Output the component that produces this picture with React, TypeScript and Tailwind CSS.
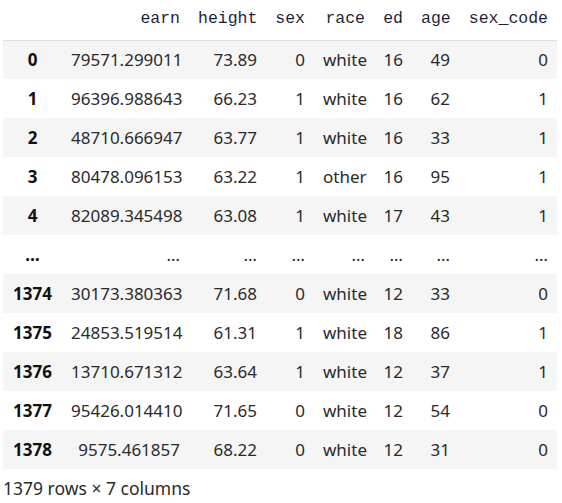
import React from "react";

const columns = ["earn", "height", "sex", "race", "ed", "age", "sex_code"];

// 열 너비는 스크린샷의 오른쪽 끝 위치에서 계산
const widths = [
  "w-[59px]",
  "w-[127px]",
  "w-[77px]",
  "w-[48px]",
  "w-[60px]",
  "w-[38px]",
  "w-[47px]",
  "w-[98px]",
];

const rows: string[][] = [
  ["0", "79571.299011", "73.89", "0", "white", "16", "49", "0"],
  ["1", "96396.988643", "66.23", "1", "white", "16", "62", "1"],
  ["2", "48710.666947", "63.77", "1", "white", "16", "33", "1"],
  ["3", "80478.096153", "63.22", "1", "other", "16", "95", "1"],
  ["4", "82089.345498", "63.08", "1", "white", "17", "43", "1"],
  ["...", "...", "...", "...", "...", "...", "...", "..."],
  ["1374", "30173.380363", "71.68", "0", "white", "12", "33", "0"],
  ["1375", "24853.519514", "61.31", "1", "white", "18", "86", "1"],
  ["1376", "13710.671312", "63.64", "1", "white", "12", "37", "1"],
  ["1377", "95426.014410", "71.65", "0", "white", "12", "54", "0"],
  ["1378", "9575.461857", "68.22", "0", "white", "12", "31", "0"],
];

const App: React.FC = () => {
  return (
    <div className="bg-white w-[562px] h-[503px] pl-[3px] text-[#2a2a2a] font-['Noto_Sans','Noto_Sans_CJK_KR',sans-serif]">
      <table className="table-fixed border-collapse w-[554px] text-[17px]">
        <colgroup>
          {widths.map((w, i) => (
            <col key={i} className={w} />
          ))}
        </colgroup>
        <thead>
          <tr className="h-[40px] border-b border-[#e0e0e0]">
            <th />
            {columns.map((c) => (
              <th
                key={c}
                className="text-right px-[9px] font-normal font-['Liberation_Mono',monospace] text-[16.5px] text-[#1f1f3a]"
              >
                {c}
              </th>
            ))}
          </tr>
        </thead>
        <tbody>
          {rows.map((r, i) => (
            <tr key={i} className={`h-[39px] ${i % 2 === 0 ? "bg-[#f5f5f5]" : "bg-white"}`}>
              <th className="text-center font-bold text-[#111]">
                {r[0] === "..." ? "…" : r[0]}
              </th>
              {r.slice(1).map((v, j) => (
                <td key={j} className="text-right px-[9px] whitespace-nowrap">
                  {v === "..." ? "…" : v}
                </td>
              ))}
            </tr>
          ))}
        </tbody>
      </table>
      <div className="mt-[6px] text-[17.5px] leading-[26px]">1379 rows × 7 columns</div>
    </div>
  );
};

export default App;
